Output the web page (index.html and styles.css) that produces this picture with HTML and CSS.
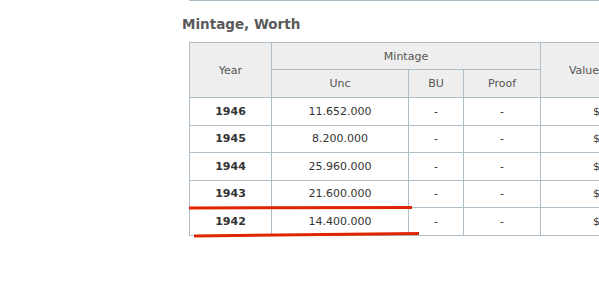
FILE: index.html
```html
<!DOCTYPE html>
<html>
<head>
<meta charset="utf-8">
<link rel="stylesheet" href="styles.css">
</head>
<body>
<div class="page">
  <div class="topline"></div>
  <h2 class="title">Mintage, Worth</h2>
  <div class="tablewrap">
    <table class="mint">
      <colgroup>
        <col class="c-year">
        <col class="c-unc">
        <col class="c-bu">
        <col class="c-proof">
        <col class="c-value">
      </colgroup>
      <thead>
        <tr class="h1">
          <th rowspan="2">Year</th>
          <th colspan="3">Mintage</th>
          <th rowspan="2">Value</th>
        </tr>
        <tr class="h2">
          <th>Unc</th>
          <th>BU</th>
          <th>Proof</th>
        </tr>
      </thead>
      <tbody>
        <tr><td class="yr">1946</td><td>11.652.000</td><td>-</td><td>-</td><td class="val">$</td></tr>
        <tr><td class="yr">1945</td><td>8.200.000</td><td>-</td><td>-</td><td class="val">$</td></tr>
        <tr><td class="yr">1944</td><td>25.960.000</td><td>-</td><td>-</td><td class="val">$</td></tr>
        <tr><td class="yr">1943</td><td>21.600.000</td><td>-</td><td>-</td><td class="val">$</td></tr>
        <tr><td class="yr">1942</td><td>14.400.000</td><td>-</td><td>-</td><td class="val">$</td></tr>
      </tbody>
    </table>
  </div>
  <svg class="marks" width="599" height="297" viewBox="0 0 599 297">
    <line x1="189" y1="208" x2="412" y2="207.5" stroke="#e02400" stroke-width="3"/>
    <line x1="194" y1="236" x2="419" y2="233.5" stroke="#e02400" stroke-width="3"/>
  </svg>
</div>
</body>
</html>
```

FILE: styles.css
```css
html, body {
  margin: 0;
  padding: 0;
  background: #ffffff;
  overflow: hidden;
}
body {
  width: 599px;
  height: 297px;
  font-family: "DejaVu Sans", Verdana, sans-serif;
}
.page {
  position: relative;
  width: 800px;
  padding-left: 182px;
}
.topline {
  margin-left: 7px;
  height: 1px;
  background: #a9bcc8;
}
.title {
  margin: 15px 0 0 0;
  font-size: 13.5px;
  line-height: 16px;
  font-weight: bold;
  color: #5a5a5a;
}
.tablewrap {
  margin-top: 10px;
  margin-left: 7px;
}
.mint {
  border-collapse: collapse;
  table-layout: fixed;
  width: 438px;
  font-size: 11px;
  color: #333333;
}
.mint th,
.mint td {
  border: 1px solid #aebec8;
  text-align: center;
  padding: 0;
  white-space: nowrap;
  overflow: hidden;
}
.mint th {
  background: #eeeeee;
  font-weight: normal;
  color: #555555;
}
.h1 th {
  height: 26px;
}
.h2 th {
  height: 27px;
}
.mint td {
  height: 26.5px;
}
.c-year { width: 82px; }
.c-unc { width: 137px; }
.c-bu { width: 55px; }
.c-proof { width: 77px; }
.c-value { width: 87px; }
.yr {
  font-weight: bold;
  color: #333333;
}
.mint td.val {
  text-align: left;
  padding-left: 52px;
}
.marks {
  position: absolute;
  left: 0;
  top: 0;
  pointer-events: none;
}
```
